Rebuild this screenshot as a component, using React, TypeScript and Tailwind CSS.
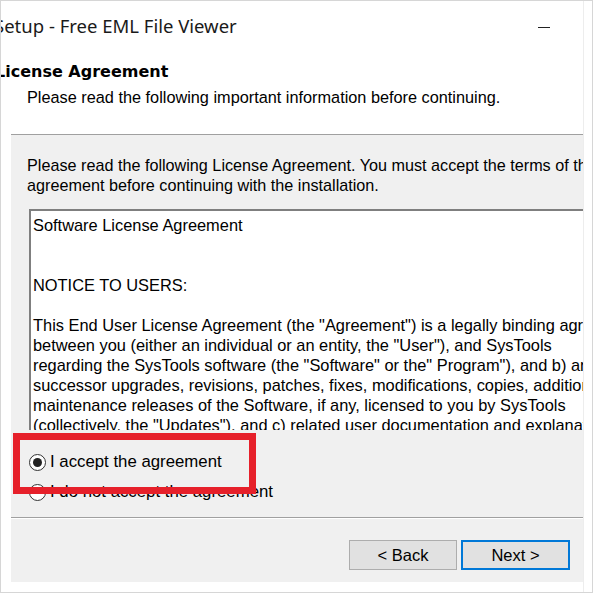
import React from 'react';

const licenseLines = [
  'Software License Agreement',
  '',
  '',
  'NOTICE TO USERS:',
  '',
  'This End User License Agreement (the "Agreement") is a legally binding agreement',
  'between you (either an individual or an entity, the "User"), and SysTools',
  'regarding the SysTools software (the "Software" or the" Program"), and b) any',
  'successor upgrades, revisions, patches, fixes, modifications, copies, additions',
  'maintenance releases of the Software, if any, licensed to you by SysTools',
  '(collectively, the "Updates"), and c) related user documentation and explanatory',
];

const Radio: React.FC<{ checked?: boolean; label: string }> = ({ checked, label }) => (
  <div className="flex items-center h-[30px] pl-[18px]">
    <span className="w-[17px] h-[17px] rounded-full border border-[#333] bg-white flex items-center justify-center">
      {checked && <span className="w-[9px] h-[9px] rounded-full bg-[#222]" />}
    </span>
    <span className="ml-[4px] text-[16.8px] text-black">{label}</span>
  </div>
);

export default function App() {
  return (
    <div className="relative w-[593px] h-[593px] bg-white border border-[#d6d6d6] overflow-hidden font-['Liberation_Sans',Arial,sans-serif]">
      <div className="w-[583px] h-full border-r border-[#ededed] flex flex-col">
        {/* title bar */}
        <div className="h-[49px] flex items-center justify-between shrink-0">
          <span className="ml-[-7px] text-[18.5px] text-[#1a1a1a] font-['Noto_Sans',sans-serif]">Setup - Free EML File Viewer</span>
          <span className="w-[12px] h-[1px] bg-[#222] mr-[33px] mt-[4px]" />
        </div>

        {/* wizard header */}
        <div className="h-[84px] shrink-0 pt-[12px]">
          <div className="ml-[-6px] text-[16px] leading-[20px] font-bold text-black font-['DejaVu_Sans',sans-serif]">License Agreement</div>
          <div className="ml-[26px] mt-[5px] text-[16.3px] leading-[20px] text-black">
            Please read the following important information before continuing.
          </div>
        </div>

        {/* panel */}
        <div className="flex-1 ml-[10px] mb-[10px] bg-[#f0f0f0] border-t border-[#a0a0a0] overflow-hidden flex flex-col">
          <div className="pt-[20px] pl-[16px] text-[16.2px] leading-[20px] text-black whitespace-nowrap">
            <div>Please read the following License Agreement. You must accept the terms of this</div>
            <div>agreement before continuing with the installation.</div>
          </div>

          <div className="mt-[14px] ml-[18px] w-[600px] h-[221px] shrink-0 bg-white border-t-2 border-l-2 border-[#7f7f7f] pt-[4px] pl-[2px] overflow-hidden">
            {licenseLines.map((line, i) => (
              <div key={i} className="h-[20px] leading-[20px] text-[16.4px] text-black whitespace-nowrap">
                {line}
              </div>
            ))}
          </div>

          <div className="mt-[17px]">
            <Radio checked label="I accept the agreement" />
            <Radio label="I do not accept the agreement" />
          </div>

          <div className="mt-[10px] border-t border-[#a0a0a0] border-b border-b-white" />

          <div className="mt-[21px] flex justify-end gap-[4px] pr-[13px]">
            <button className="w-[108px] h-[30px] bg-[#e1e1e1] border border-[#adadad] text-[16.5px] text-black">
              &lt; Back
            </button>
            <button className="w-[109px] h-[30px] bg-[#e1e1e1] border-2 border-[#0078d7] text-[16.5px] text-black">
              Next &gt;
            </button>
          </div>
        </div>
      </div>

      {/* highlight box drawn over the screenshot */}
      <div className="absolute left-[12px] top-[432px] w-[243px] h-[61px] border-[7px] border-[#e6202a]" />
    </div>
  );
}
